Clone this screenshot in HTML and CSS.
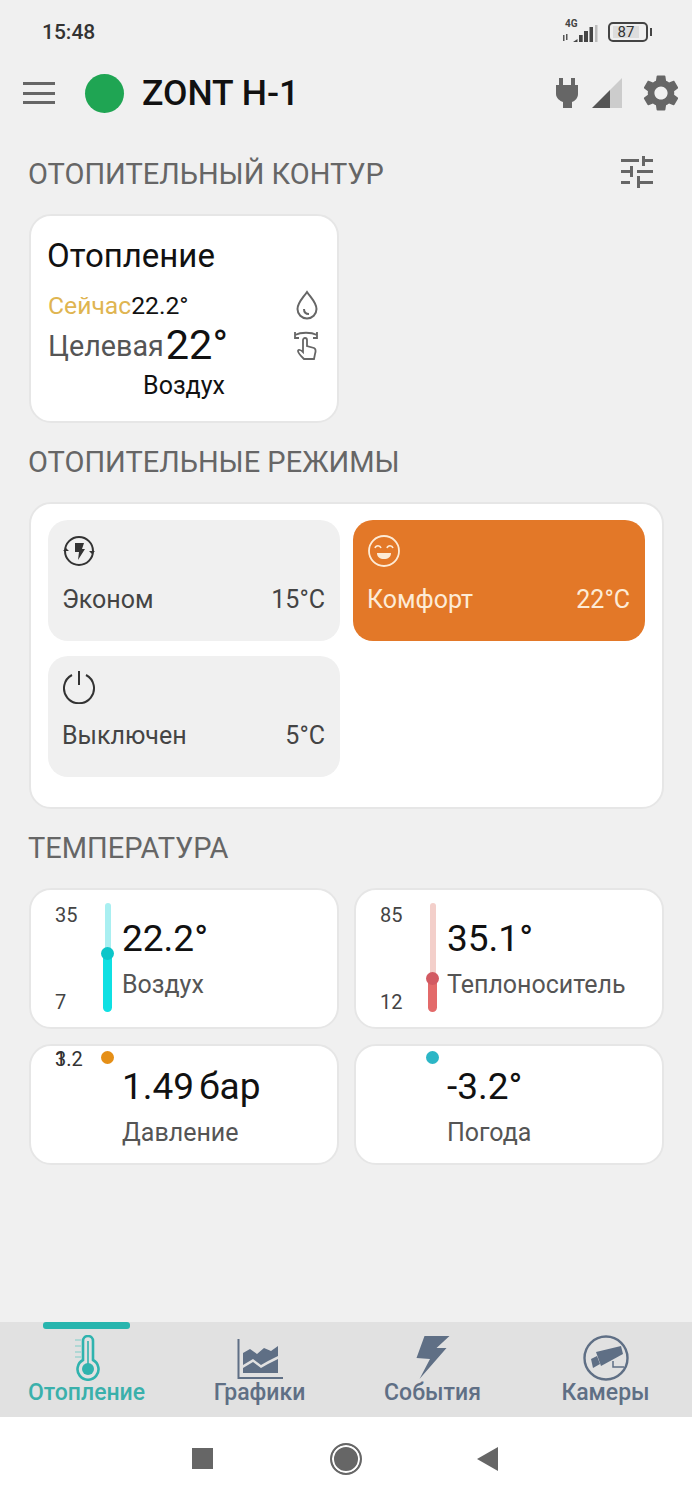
FILE: index.html
```html
<!DOCTYPE html>
<html>

<head>
    <meta charset="utf-8" />
    <title>ZONT H-1</title>
    <meta name="viewport" content="width=device-width, initial-scale=1">
    <link rel="stylesheet" href="styles.css">
</head>

<body>
    <div class="screen">
        <!-- status bar -->
        <div class="status">
            <span class="time">15:48</span>
            <div class="status-icons">
                <div class="net">
                    <span class="net-label">4G</span>
                    <svg class="net-bars" width="36" height="20" viewBox="0 0 36 20">
                        <path d="M1 12h1.500v6H1zM4 11h1.500v6H4z" fill="#555"/>
                        <path d="M11 19l4.500-3v3zM17 19v-7h3.700v7zM22 19V8h4v11zM27.500 19V4h3.500v15z" fill="#444"/>
                        <path d="M33 19V2h2.500v17z" fill="#bbb"/>
                    </svg>
                </div>
                <div class="battery"><span class="battery-level">87</span></div>
                <span class="battery-tip"></span>
            </div>
        </div>

        <!-- app bar -->
        <header class="appbar">
            <div class="burger"><span></span><span></span><span></span></div>
            <span class="online"></span>
            <h1 class="device">ZONT H-1</h1>
            <div class="appbar-icons">
                <svg width="22" height="30" viewBox="0 0 22 30"><path d="M3 0h4v7h8V0h4v7h3v9c0 4-3 7-6 8v6H7v-6c-3-1-7-4-7-8V7h3z" fill="#666"/></svg>
                <svg width="32" height="32" viewBox="0 0 32 32"><path d="M1 31 19 13v18z" fill="#555"/><path d="M19 13 31 1v30H19z" fill="#ccc"/></svg>
                <svg class="gear" width="44" height="44" viewBox="0 0 24 24"><path fill="#666" d="M19.14 12.94c.04-.3.06-.61.06-.94 0-.32-.02-.64-.07-.94l2.03-1.58c.18-.14.23-.41.12-.61l-1.92-3.32c-.12-.22-.37-.29-.59-.22l-2.39.96c-.5-.38-1.03-.7-1.62-.94l-.36-2.54c-.04-.24-.24-.41-.48-.41h-3.84c-.24 0-.43.17-.47.41l-.36 2.54c-.59.24-1.13.57-1.62.94l-2.39-.96c-.22-.08-.47 0-.59.22L2.74 8.87c-.12.21-.08.47.12.61l2.03 1.58c-.05.3-.09.63-.09.94s.02.64.07.94l-2.03 1.58c-.18.14-.23.41-.12.61l1.92 3.32c.12.22.37.29.59.22l2.39-.96c.5.38 1.03.7 1.62.94l.36 2.54c.05.24.24.41.48.41h3.84c.24 0 .44-.17.47-.41l.36-2.54c.59-.24 1.13-.56 1.62-.94l2.39.96c.22.08.47 0 .59-.22l1.92-3.32c.12-.22.07-.47-.12-.61l-2.01-1.58zM12 15.6c-1.98 0-3.6-1.62-3.6-3.6s1.62-3.6 3.6-3.6 3.6 1.62 3.6 3.6-1.62 3.6-3.6 3.6z"/></svg>
            </div>
        </header>

        <main class="content">
            <div class="section-head section-first">
                <h2>ОТОПИТЕЛЬНЫЙ КОНТУР</h2>
                <svg width="34" height="32" viewBox="0 0 34 32"><path fill="#666" d="M1 3h18v3H1zM22 0h3v10h-3zM25 3h8v3h-8zM1 14h9v3H1zM10 10h3v11h-3zM17 14h16v3H17zM1 25h9v3H1zM17 20h3v12h-3zM20 25h13v3H20z"/></svg>
            </div>

            <section class="card circuit">
                <div class="circuit-title">Отопление</div>
                <div class="circuit-row now">
                    <span class="now-label">Сейчас</span><span>22.2°</span>
                    <svg class="row-icon" width="24" height="30" viewBox="0 0 24 30"><path d="M12 2C7 9 2.500 13 2.500 19a9.500 9.500 0 0 0 19 0C21.500 13 17 9 12 2z" fill="none" stroke="#666" stroke-width="2"/><path d="M9 19c0 3 2 5 5 5" fill="none" stroke="#666" stroke-width="2"/></svg>
                </div>
                <div class="circuit-row target">
                    <span class="target-label">Целевая</span><span class="target-value">22°</span>
                    <svg class="row-icon" width="26" height="30" viewBox="0 0 26 30"><path d="M2 4c6-3 16-3 22 0M2 1v6h4M24 1v6h-4" fill="none" stroke="#666" stroke-width="1.800"/><path d="M10 27c-2-2-5-5-5-7s3-1 5 1V9a2 2 0 0 1 4 0v6l7 2c2 1 2 3 1 6l-1 5H11z" fill="none" stroke="#666" stroke-width="1.800"/></svg>
                </div>
                <div class="circuit-sensor">Воздух</div>
            </section>

            <div class="section-head">
                <h2>ОТОПИТЕЛЬНЫЕ РЕЖИМЫ</h2>
            </div>

            <section class="card modes">
                <div class="mode">
                    <svg class="mode-icon" width="34" height="34" viewBox="0 0 34 34"><circle cx="17" cy="17" r="14" fill="none" stroke="#333" stroke-width="2"/><path d="M1 17l3-3 3 3zM27 17l3 3 3-3z" fill="#333"/><path d="M13 9h9l-2 6h3l-7 11 1-8h-4z" fill="#333"/></svg>
                    <div class="mode-row"><span>Эконом</span><span>15°C</span></div>
                </div>
                <div class="mode mode-active">
                    <svg class="mode-icon" width="34" height="34" viewBox="0 0 34 34"><circle cx="17" cy="17" r="15" fill="none" stroke="#fdebd6" stroke-width="1.800"/><path d="M8 14c1-3 5-3 6 0M20 14c1-3 5-3 6 0" fill="none" stroke="#fdebd6" stroke-width="1.600"/><path d="M10 19h14c0 4-3 6-7 6s-7-2-7-6z" fill="#fdebd6"/></svg>
                    <div class="mode-row"><span>Комфорт</span><span>22°C</span></div>
                </div>
                <div class="mode">
                    <svg class="mode-icon" width="34" height="34" viewBox="0 0 34 34"><path d="M10 5a15 15 0 1 0 14 0M17 1v14" fill="none" stroke="#333" stroke-width="2"/></svg>
                    <div class="mode-row"><span>Выключен</span><span>5°C</span></div>
                </div>
            </section>

            <div class="section-head">
                <h2>ТЕМПЕРАТУРА</h2>
            </div>

            <section class="sensors">
                <div class="card sensor sensor-tall">
                    <div class="scale"><span>35</span><span>7</span></div>
                    <div class="gauge gauge-air">
                        <div class="gauge-rest"></div>
                        <span class="gauge-thumb"></span>
                        <div class="gauge-fill"></div>
                    </div>
                    <div class="sensor-text">
                        <div class="sensor-value">22.2°</div>
                        <div class="sensor-name">Воздух</div>
                    </div>
                </div>
                <div class="card sensor sensor-tall">
                    <div class="scale"><span>85</span><span>12</span></div>
                    <div class="gauge gauge-water">
                        <div class="gauge-rest"></div>
                        <span class="gauge-thumb"></span>
                        <div class="gauge-fill"></div>
                    </div>
                    <div class="sensor-text">
                        <div class="sensor-value">35.1°</div>
                        <div class="sensor-name">Теплоноситель</div>
                    </div>
                </div>
                <div class="card sensor sensor-low">
                    <div class="scale-flat"><span>1</span><span>3.2</span></div>
                    <div class="dot-wrap"><span class="dot dot-orange"></span></div>
                    <div class="sensor-text">
                        <div class="sensor-value">1.49<span class="unit">бар</span></div>
                        <div class="sensor-name">Давление</div>
                    </div>
                </div>
                <div class="card sensor sensor-low">
                    <div class="scale-flat"></div>
                    <div class="dot-wrap"><span class="dot dot-teal"></span></div>
                    <div class="sensor-text">
                        <div class="sensor-value">-3.2°</div>
                        <div class="sensor-name">Погода</div>
                    </div>
                </div>
            </section>
        </main>

        <!-- tabs -->
        <nav class="tabs">
            <div class="tab tab-active">
                <span class="tab-mark"></span>
                <svg width="34" height="46" viewBox="0 0 34 46"><path d="M13 25V6a5 5 0 0 1 10 0v19a10.500 10.500 0 1 1-10 0z" fill="none" stroke="#2fb3ae" stroke-width="2.600"/><circle cx="18" cy="34" r="6" fill="#2fb3ae"/><path d="M18 6v24" stroke="#2fb3ae" stroke-width="1.600"/><path d="M5 5h6M5 11h6M5 17h6M5 22h6" stroke="#9fd3d0" stroke-width="1.600"/></svg>
                <span class="tab-label">Отопление</span>
            </div>
            <div class="tab">
                <svg width="46" height="42" viewBox="0 0 46 42"><path d="M1.500 0v39H46" fill="none" stroke="#5f6f85" stroke-width="2"/><path d="M6 14l7-4 7 5 7-6 7 3 7-5v10l-10 5-7 4-8-6-10 6z" fill="#5f6f85"/><path d="M6 34v-5l10-6 8 6 7-4 10-5v14z" fill="#5f6f85"/></svg>
                <span class="tab-label">Графики</span>
            </div>
            <div class="tab">
                <svg width="36" height="46" viewBox="0 0 36 46"><path d="M9.500 1h25l-13 12h10L4.500 44 15 24 1.500 23z" fill="#5f6f85"/></svg>
                <span class="tab-label">События</span>
            </div>
            <div class="tab">
                <svg width="46" height="46" viewBox="0 0 46 46"><circle cx="23" cy="23" r="21.500" fill="none" stroke="#5f6f85" stroke-width="2.400"/><path d="M13 17l25-6 2 8-22 12z" fill="#5f6f85"/><path d="M8 24l6-3 3 8-7 4z" fill="#5f6f85"/><path d="M30 26v6h11" fill="none" stroke="#5f6f85" stroke-width="1.500"/></svg>
                <span class="tab-label">Камеры</span>
            </div>
        </nav>

        <!-- android buttons -->
        <div class="sysnav">
            <span class="sys-square"></span>
            <span class="sys-circle"></span>
            <svg width="22" height="24" viewBox="0 0 22 24"><path d="M21 0v24L0 12z" fill="#666"/></svg>
        </div>
    </div>
</body>

</html>
```

FILE: styles.css
```css
* {
  box-sizing: border-box;
}

body {
  margin: 0;
  background: #f0f0f0;
  font-family: Roboto, "Noto Sans", sans-serif;
  color: #111;
}

h1, h2 {
  margin: 0;
  font-weight: 400;
}

.screen {
  width: 692px;
  height: 1500px;
  display: flex;
  flex-direction: column;
  overflow: hidden;
}

/* status bar */
.status {
  height: 64px;
  flex: none;
  display: flex;
  justify-content: space-between;
  align-items: center;
  padding: 0 40px 0 42px;
}

.time {
  font-size: 21px;
  font-weight: 500;
  color: #333;
}

.status-icons {
  display: flex;
  align-items: center;
}

.net {
  width: 36px;
  height: 22px;
  display: flex;
  align-items: flex-end;
  position: relative;
}

.net-label {
  position: absolute;
  left: 3px;
  top: -3px;
  font-size: 10px;
  font-weight: 700;
  color: #444;
}

.battery {
  width: 40px;
  height: 20px;
  margin-left: 10px;
  border: 2px solid #444;
  border-radius: 5px;
  padding: 2px 3px;
  display: flex;
}

.battery-level {
  width: 87%;
  background: #ddd;
  font-size: 15px;
  line-height: 12px;
  text-align: center;
  color: #333;
}

.battery-tip {
  width: 2px;
  height: 8px;
  margin-left: 2px;
  background: #444;
}

/* app bar */
.appbar {
  height: 58px;
  flex: none;
  display: flex;
  align-items: center;
  padding: 0 9px 0 23px;
}

.burger {
  width: 32px;
  display: flex;
  flex-direction: column;
  gap: 6.500px;
}

.burger span {
  height: 3px;
  background: #666;
}

.online {
  width: 39px;
  height: 39px;
  margin-left: 30px;
  border-radius: 50%;
  background: #1fa553;
}

.device {
  margin-left: 18px;
  font-size: 35.500px;
  font-weight: 500;
  color: #111;
}

.appbar-icons {
  margin-left: auto;
  display: flex;
  align-items: center;
  gap: 13px;
}

.gear {
  margin-left: 3px;
}

.content {
  flex: 1;
  padding: 0 28px 0 29px;
}

.section-head {
  height: 44px;
  margin: 17px 0 18px;
  display: flex;
  justify-content: space-between;
  align-items: center;
}

.section-first {
  margin-top: 30px;
}

.section-head h2 {
  margin-left: -1px;
  font-size: 29px;
  color: #666;
}

.section-head svg {
  margin: -4px 10px 0 0;
}

.card {
  background: #fff;
  border: 2px solid #e6e6e6;
  border-radius: 22px;
}

/* heating circuit */
.circuit {
  width: 310px;
  height: 209px;
  padding: 20px 17px 0;
}

.circuit-title {
  margin-left: -1px;
  font-size: 33px;
  line-height: 40px;
}

.circuit-row {
  display: flex;
  align-items: center;
}

.now {
  height: 38px;
  margin-top: 10px;
  font-size: 24.700px;
}

.now-label {
  color: #dfb551;
}

.target {
  height: 42px;
  margin-top: 1px;
}

.target-label {
  font-size: 28.700px;
  color: #555;
}

.target-value {
  font-size: 41.500px;
  margin-left: 2px;
  line-height: 42px;
  padding-bottom: 2px;
}

.row-icon {
  margin-left: auto;
  margin-right: 1px;
}

.circuit-sensor {
  font-size: 25px;
  line-height: 30px;
  margin-top: 4px;
  text-align: center;
}

/* modes */
.modes {
  height: 307px;
  padding: 16px 17px 0;
  display: grid;
  grid-template-columns: 292px 292px;
  grid-template-rows: 121px 121px;
  column-gap: 13px;
  row-gap: 15px;
}

.mode {
  background: #f0f0f0;
  border-radius: 20px;
  padding: 14px 15px 0 14px;
  color: #444;
}

.mode-active {
  background: #e37828;
  color: #fdebd6;
}

.mode-icon {
  display: block;
}

.mode-row {
  margin-top: 17px;
  display: flex;
  justify-content: space-between;
  font-size: 25px;
  line-height: 30px;
}

/* sensors */
.sensors {
  display: grid;
  grid-template-columns: 310px 310px;
  grid-template-rows: 141px 121px;
  column-gap: 15px;
  row-gap: 15px;
}

.sensor {
  display: flex;
  padding-left: 24px;
}

.scale {
  width: 48px;
  height: 111px;
  margin-top: 13px;
  display: flex;
  flex-direction: column;
  justify-content: space-between;
  font-size: 20px;
  line-height: 24px;
  color: #444;
}

.gauge {
  width: 9px;
  height: 109px;
  margin-top: 13px;
  display: flex;
  flex-direction: column;
  align-items: center;
  position: relative;
}

.gauge-rest {
  flex: 1;
  width: 6px;
  border-radius: 3px 3px 0 0;
}

.gauge-fill {
  width: 9px;
  border-radius: 0 0 4.500px 4.500px;
}

.gauge-thumb {
  position: absolute;
  left: -2px;
  width: 13px;
  height: 13px;
  border-radius: 50%;
}

.gauge-air .gauge-rest { background: #a9eff1; }
.gauge-air .gauge-fill { background: #0fe0e3; height: 59px; }
.gauge-air .gauge-thumb { background: #0cc6c9; top: 44px; }

.gauge-water .gauge-rest { background: #f3cfca; }
.gauge-water .gauge-fill { background: #e36a6a; height: 34px; }
.gauge-water .gauge-thumb { background: #d25a62; top: 69px; }

.sensor-text {
  margin-left: 10px;
}

.sensor-tall .sensor-text {
  padding-top: 27px;
}

.sensor-low .sensor-text {
  padding-top: 19px;
}

.sensor-value {
  font-size: 37px;
  line-height: 44px;
}

.unit {
  margin-left: 5px;
}

.sensor-name {
  font-size: 25px;
  line-height: 30px;
  color: #555;
}

.sensor-tall .sensor-name {
  margin-top: 9px;
}

.sensor-low .sensor-name {
  margin-top: 9px;
}

/* 1 and 3.2 are drawn on top of each other, same as the app does */
.scale-flat {
  width: 48px;
  height: 24px;
  margin-top: 1px;
  display: grid;
  font-size: 20px;
  line-height: 24px;
  color: #333;
}

.scale-flat span {
  grid-area: 1 / 1;
}

.dot-wrap {
  width: 9px;
  display: flex;
  justify-content: center;
  padding-top: 5px;
}

.dot {
  flex: none;
  width: 13px;
  height: 13px;
  border-radius: 50%;
}

.dot-orange { background: #e58f17; }
.dot-teal { background: #2cb6c6; }

/* tabs */
.tabs {
  height: 95px;
  flex: none;
  background: #e1e1e1;
  display: grid;
  grid-template-columns: repeat(4, 173px);
}

.tab {
  display: flex;
  flex-direction: column;
  align-items: center;
  justify-content: flex-end;
  position: relative;
  padding-bottom: 12px;
  color: #5f6f85;
}

.tab svg {
  margin-bottom: -1px;
}

.tab-active {
  color: #3ab0ab;
}

.tab-mark {
  position: absolute;
  top: 0;
  left: 43px;
  width: 87px;
  height: 7px;
  border-radius: 3px;
  background: #27b5ae;
}

.tab-label {
  font-size: 23px;
  font-weight: 500;
  line-height: 25px;
}

/* android buttons */
.sysnav {
  height: 83px;
  flex: none;
  background: #fff;
  display: flex;
  align-items: center;
  padding-left: 192px;
}

.sys-square {
  width: 21px;
  height: 21px;
  background: #666;
}

.sys-circle {
  width: 32px;
  height: 32px;
  margin-left: 117px;
  border-radius: 50%;
  background: #666;
  border: 2px solid #666;
  box-shadow: inset 0 0 0 2px #fff;
}

.sysnav svg {
  margin-left: 115px;
}
```
